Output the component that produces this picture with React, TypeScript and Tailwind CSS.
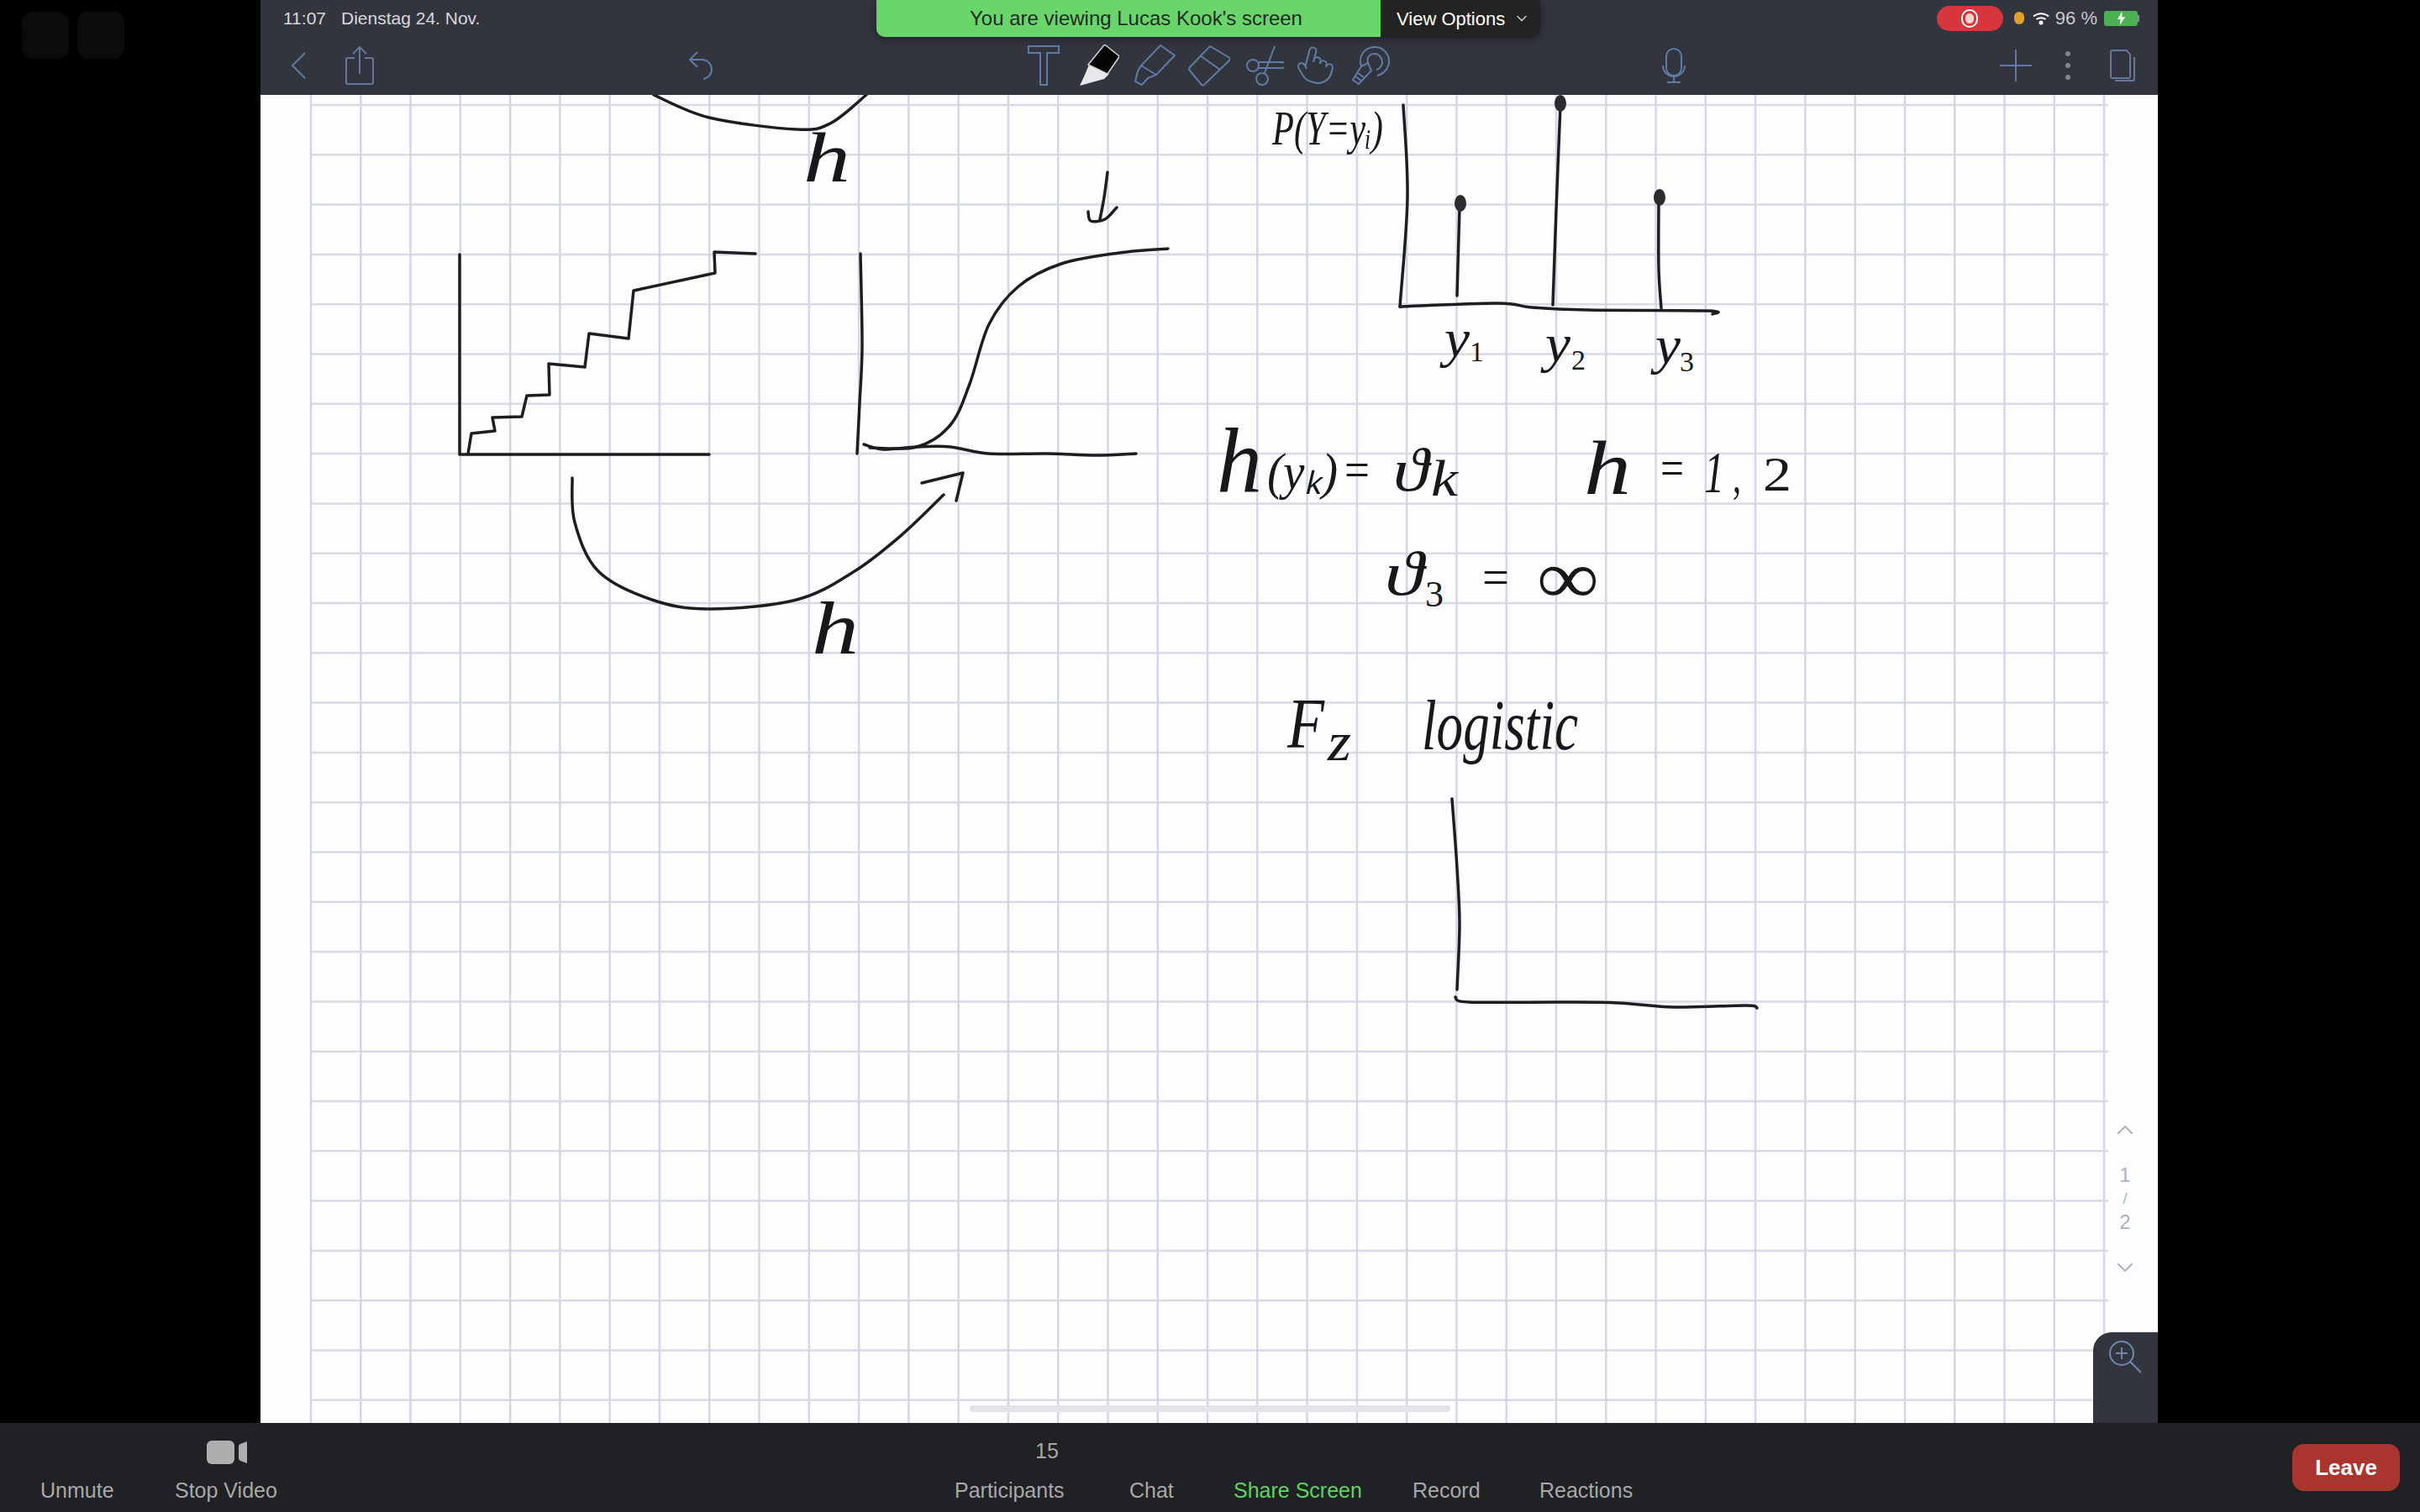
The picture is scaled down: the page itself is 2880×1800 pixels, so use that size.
import { ChevronDown, ChevronUp, Pointer } from "lucide-react";
import type { ReactNode } from "react";

type Pt = [number, number];

// Catmull-Rom through the points, good enough for pen strokes
function smooth(pts: Pt[]) {
  let d = `M${pts[0][0]} ${pts[0][1]}`;
  for (let i = 0; i < pts.length - 1; i++) {
    const p0 = pts[i - 1] ?? pts[i];
    const p1 = pts[i];
    const p2 = pts[i + 1];
    const p3 = pts[i + 2] ?? p2;
    const c1x = p1[0] + (p2[0] - p0[0]) / 6;
    const c1y = p1[1] + (p2[1] - p0[1]) / 6;
    const c2x = p2[0] - (p3[0] - p1[0]) / 6;
    const c2y = p2[1] - (p3[1] - p1[1]) / 6;
    d += ` C${c1x} ${c1y} ${c2x} ${c2y} ${p2[0]} ${p2[1]}`;
  }
  return d;
}

const poly = (pts: Pt[]) => "M" + pts.map((p) => p.join(" ")).join(" L");

const smoothStrokes: Pt[][] = [
  [[778, 113], [844, 140], [948, 154], [988, 147], [1031, 113]],
  [[1318, 205], [1314, 235], [1309, 261]],
  [[1329, 247], [1315, 261], [1298, 263], [1295, 252]],
  [[1024, 302], [1026, 412], [1023, 480], [1020, 540]],
  [[1028, 529], [1051, 535], [1091, 532], [1131, 532], [1177, 540], [1246, 540], [1304, 542], [1352, 540]],
  [[1035, 533], [1091, 532], [1131, 506], [1154, 457], [1177, 386], [1212, 341], [1263, 314], [1332, 301], [1390, 296]],
  [[681, 569], [684, 622], [712, 680], [776, 714], [844, 725], [948, 714], [1017, 680], [1074, 636], [1123, 589]],
  [[1670, 125], [1675, 235], [1666, 365]],
  [[1666, 365], [1783, 361], [1823, 366], [1890, 369], [2033, 370], [2038, 374]],
  [[1857, 125], [1852, 250], [1848, 363]],
  [[1974, 243], [1974, 320], [1977, 367]],
  [[1728, 951], [1734, 1033], [1737, 1100], [1734, 1178]],
  [[1732, 1187], [1748, 1193], [1859, 1193], [1926, 1194], [1993, 1199], [2078, 1197], [2091, 1200]],
];

const straightStrokes: Pt[][] = [
  [[547, 303], [547, 541], [844, 541]],
  [
    [557, 540], [561, 516], [589, 513], [586, 497], [621, 496], [627, 471], [654, 470], [653, 433],
    [696, 437], [701, 397], [748, 403], [754, 346], [851, 325], [850, 300], [899, 302],
  ],
  [[1097, 575], [1146, 563], [1138, 596]],
  [[1737, 247], [1734, 352]],
];

const dots: Pt[] = [[1738, 242], [1857, 123], [1975, 235]];

function Ink({ x, y, size, w, plain, children }: { x: number; y: number; size: number; w?: number; plain?: boolean; children: ReactNode }) {
  return (
    <text
      x={x}
      y={y}
      fontSize={size}
      textLength={w}
      lengthAdjust={w ? "spacingAndGlyphs" : undefined}
      fontStyle={plain ? "normal" : "italic"}
      fill="#17181a"
    >
      {children}
    </text>
  );
}

function Notebook() {
  const columns = Array.from({ length: 37 }, (_, i) => 370 + i * 59.28);
  const rows = Array.from({ length: 27 }, (_, i) => 125 + i * 59.3);
  return (
    <svg viewBox="310 113 2258 1581" className="block w-full h-full font-['Liberation_Serif',serif]">
      <rect x="310" y="113" width="2258" height="1581" fill="#fdfdfe" />
      {rows.map((y) => (
        <line key={y} x1="370" x2="2509" y1={y} y2={y} stroke="#d9dae3" strokeWidth="2.5" />
      ))}
      {columns.map((x) => (
        <line key={x} x1={x} x2={x} y1="113" y2="1694" stroke="#d3d6e6" strokeWidth="2.5" />
      ))}

      <g fill="none" stroke="#1d1e20" strokeWidth="3.5" strokeLinecap="round" strokeLinejoin="round">
        {smoothStrokes.map((pts, i) => (
          <path key={i} d={smooth(pts)} />
        ))}
        {straightStrokes.map((pts, i) => (
          <path key={i} d={poly(pts)} />
        ))}
      </g>
      {dots.map(([x, y]) => (
        <ellipse key={x} cx={x} cy={y} rx="7" ry="10" fill="#2b2c2e" />
      ))}

      <Ink x={956} y={216} size={84} w={56}>h</Ink>
      <Ink x={966} y={778} size={88} w={56}>h</Ink>

      <Ink x={1514} y={172} size={56} w={132}>P(Y=yᵢ)</Ink>
      <Ink x={1719} y={424} size={64} w={30}>y</Ink>
      <Ink x={1749} y={430} size={34} plain>1</Ink>
      <Ink x={1839} y={430} size={64} w={30}>y</Ink>
      <Ink x={1870} y={440} size={34} plain>2</Ink>
      <Ink x={1970} y={432} size={64} w={30}>y</Ink>
      <Ink x={1999} y={442} size={34} plain>3</Ink>

      <Ink x={1448} y={586} size={110} w={54}>h</Ink>
      <Ink x={1508} y={582} size={62} w={84}>(yₖ)</Ink>
      <Ink x={1600} y={580} size={62} plain w={30}>=</Ink>
      <Ink x={1658} y={584} size={72} w={42}>ϑ</Ink>
      <Ink x={1703} y={590} size={62} w={32}>k</Ink>
      <Ink x={1885} y={588} size={90} w={56}>h</Ink>
      <Ink x={1976} y={578} size={62} plain w={28}>=</Ink>
      <Ink x={2028} y={586} size={70} w={24}>1</Ink>
      <Ink x={2062} y={586} size={60} w={10} plain>,</Ink>
      <Ink x={2098} y={584} size={58} w={34} plain>2</Ink>

      <Ink x={1648} y={708} size={74} w={46}>ϑ</Ink>
      <Ink x={1696} y={722} size={44} plain>3</Ink>
      <Ink x={1764} y={708} size={62} plain w={32}>=</Ink>
      <Ink x={1830} y={718} size={90} w={72}>∞</Ink>

      <Ink x={1532} y={890} size={84} w={44}>F</Ink>
      <Ink x={1580} y={905} size={66} w={28}>z</Ink>
      <Ink x={1692} y={892} size={84} w={186}>logistic</Ink>
    </svg>
  );
}

const toolStroke = "fill-none stroke-[#5f7ba6] stroke-2";

function StatusBar() {
  return (
    <div className="flex items-center h-[43px] pl-[27px] pr-[22px] text-[21px] text-[#d8d8dc]">
      <span>11:07</span>
      <span className="ml-[18px]">Dienstag 24. Nov.</span>
      <div className="ml-auto flex items-center w-[79px] h-[30px] justify-center rounded-full bg-[#d6363c]">
        <div className="flex items-center justify-center w-[20px] h-[22px] rounded-full border-2 border-white">
          <div className="w-[10px] h-[12px] rounded-full bg-[#f5d5d0]" />
        </div>
      </div>
      <div className="ml-[13px] w-[12px] h-[15px] rounded-full bg-[#e3a02c]" />
      <svg viewBox="0 0 20 16" className="ml-[10px] w-[20px] h-[16px] fill-none stroke-white stroke-2">
        <path d="M1 5.5C6 1 14 1 19 5.5M4.5 9c3-2.5 8-2.5 11 0" />
        <circle cx="10" cy="13" r="2.5" className="fill-white stroke-none" />
      </svg>
      <span className="ml-[7px] text-[22px] text-[#c9c9cc]">96 %</span>
      <div className="ml-[8px] flex items-center">
        <div className="flex items-center justify-center w-[40px] h-[18px] rounded-[3px] bg-[#4bb153]">
          <svg viewBox="0 0 12 18" className="w-[11px] h-[18px] fill-white">
            <path d="M7 0 1 10h4l-1 8 7-11H7z" />
          </svg>
        </div>
        <div className="w-[2px] h-[8px] bg-[#8a8a92]" />
      </div>
    </div>
  );
}

function ToolBar() {
  return (
    <div className="flex items-center h-[70px] pb-[1px]">
      <svg viewBox="0 0 18 32" className={`ml-[36px] w-[18px] h-[32px] ${toolStroke} stroke-[#4f86c6]`}>
        <path d="M17 1 2 16l15 15" />
      </svg>
      <svg viewBox="0 0 34 46" className={`ml-[47px] w-[34px] h-[46px] ${toolStroke} stroke-[#66789a]`}>
        <path d="M11 14H3a2 2 0 0 0-2 2v27a2 2 0 0 0 2 2h28a2 2 0 0 0 2-2V16a2 2 0 0 0-2-2h-8" />
        <path d="M17 33V2M9 9l8-8 8 8" />
      </svg>
      <svg viewBox="0 0 30 34" className={`ml-[374px] w-[30px] h-[34px] ${toolStroke}`}>
        <path d="M11 1 2 10l9 9M2 10h14a12 12 0 0 1 12 12c0 5-4 10-10 11" />
      </svg>
      <svg viewBox="0 0 38 48" className={`ml-[374px] w-[38px] h-[48px] ${toolStroke}`}>
        <path d="M1 1h36v8H23v38h-8V9H1z" />
      </svg>
      <svg viewBox="0 0 48 50" className="ml-[23px] w-[48px] h-[50px]">
        <path d="M1 49 7 36 12 24 36 35 30 41z" fill="#e8e8ea" />
        <path d="M32 1 47 13a2 2 0 0 1 0 3L34 35 11 24 29 2a2 2 0 0 1 3-1z" fill="#050505" stroke="#d8d8dc" strokeWidth="1.5" />
      </svg>
      <svg viewBox="0 0 50 50" className={`ml-[17px] w-[50px] h-[50px] ${toolStroke}`}>
        <path d="M32 1 49 13 27 36 17 40 10 48 2 44 5 32 9 25z" />
        <path d="M9 25 27 36" />
      </svg>
      <svg viewBox="0 0 50 50" className={`ml-[15px] w-[50px] h-[50px] ${toolStroke}`}>
        <path d="M26 2 48 15a3 3 0 0 1 1 4L20 47a3 3 0 0 1-4 1L2 31a3 3 0 0 1 0-4z" />
        <path d="M14 13 38 30" />
      </svg>
      <svg viewBox="0 0 46 48" className={`ml-[18px] w-[46px] h-[48px] ${toolStroke}`}>
        <circle cx="9" cy="24" r="7" />
        <circle cx="20" cy="40" r="7" />
        <path d="M35 1 23 33M16 20h28a3 3 0 0 1 0 7H15" />
      </svg>
      <Pointer className="ml-[14px] w-[48px] h-[50px] text-[#5f7ba6] rotate-[15deg]" strokeWidth={1} />
      <svg viewBox="0 0 46 48" className={`ml-[18px] w-[46px] h-[48px] ${toolStroke}`}>
        <path d="M12 25C8 13 16 2 28 2c10 0 17 8 17 17 0 8-6 15-14 17" />
        <path d="M20 21c-2-7 2-11 8-11 5 0 9 5 9 10 0 4-3 8-7 9" />
        <path d="M12 25 20 21 24 30 9 46 2 41z" />
        <path d="M8 33 15 38M5 37 12 42" />
      </svg>
      <svg viewBox="0 0 28 42" className={`ml-[324px] w-[28px] h-[42px] ${toolStroke}`}>
        <rect x="5" y="1" width="18" height="32" rx="9" />
        <path d="M1 21a13 13 0 0 0 26 0M14 34v6M6 41h16" />
      </svg>
      <svg viewBox="0 0 38 38" className={`ml-[374px] w-[38px] h-[38px] ${toolStroke}`}>
        <path d="M19 0v38M0 19h38" />
      </svg>
      <div className="ml-[40px] flex flex-col gap-[8px]">
        <div className="w-[6px] h-[6px] rounded-full bg-[#7f8694]" />
        <div className="w-[6px] h-[6px] rounded-full bg-[#7f8694]" />
        <div className="w-[6px] h-[6px] rounded-full bg-[#7f8694]" />
      </div>
      <svg viewBox="0 0 30 38" className={`ml-[47px] w-[30px] h-[38px] ${toolStroke} stroke-[#66789a]`}>
        <path d="M1 3a2 2 0 0 1 2-2h17l4 5v26a2 2 0 0 1-2 2H3a2 2 0 0 1-2-2zM6 37h21a2 2 0 0 0 2-2V9" />
      </svg>
    </div>
  );
}

function BottomLabel({ className, children }: { className: string; children: ReactNode }) {
  return <span className={`absolute bottom-[11px] leading-[30px] ${className}`}>{children}</span>;
}

export default function App() {
  return (
    <div className="relative w-[2880px] h-[1800px] overflow-hidden bg-black font-['Liberation_Sans',Arial,sans-serif]">
      <div className="flex h-[1694px]">
        {/* faint dock tiles on the black margin */}
        <div className="flex w-[310px] gap-[10px] pl-[26px] pt-[14px]">
          <div className="w-[56px] h-[56px] rounded-[13px] bg-[#0a0c0b]" />
          <div className="w-[56px] h-[56px] rounded-[13px] bg-[#0a0c0b]" />
        </div>

        <div className="relative flex flex-col w-[2258px]">
          <div className="bg-[#32343e]">
            <StatusBar />
            <ToolBar />
          </div>
          <div className="relative flex-1 min-h-0">
            <Notebook />

            <div className="absolute left-[2198px] top-[1216px] flex flex-col items-center w-[42px] text-[#a9b2c2] text-[24px] leading-[28px]">
              <ChevronUp className="w-[32px] h-[32px] mb-[24px]" strokeWidth={1.5} />
              <span>1</span>
              <span className="text-[18px]">/</span>
              <span>2</span>
              <ChevronDown className="w-[32px] h-[32px] mt-[24px]" strokeWidth={1.5} />
            </div>

            <div className="absolute left-[844px] bottom-[13px] w-[572px] h-[8px] rounded-full bg-[#e3e4e9]" />

            <div className="absolute right-0 bottom-0 w-[77px] h-[108px] rounded-tl-[22px] bg-[#32343e] pl-[19px] pt-[10px]">
              <svg viewBox="0 0 40 40" className="w-[40px] h-[40px] fill-none stroke-[#7088b0] stroke-2">
                <circle cx="15" cy="15" r="14" />
                <path d="M15 8v14M8 15h14M25 25l13 13" />
              </svg>
            </div>
          </div>

          {/* "you are viewing" banner sits over the shared screen */}
          <div className="absolute left-[733px] top-0 flex h-[44px] w-[790px] text-[24px] shadow-[0_2px_8px_rgba(0,0,0,0.4)] rounded-b-[10px]">
            <div className="flex items-center justify-center w-[600px] pl-[18px] rounded-bl-[10px] bg-[#69d66b] text-[#1f2b24]">
              You are viewing Lucas Kook's screen
            </div>
            <div className="flex items-center flex-1 rounded-br-[10px] bg-[#232323] pl-[19px] text-[22px] text-white">
              View Options
              <ChevronDown className="ml-[10px] w-[20px] h-[20px] text-[#c8c8c8]" strokeWidth={2} />
            </div>
          </div>
        </div>
      </div>

      <div className="relative h-[106px] bg-[#202124] text-[25px] text-[#a8a8a8]">
        <BottomLabel className="left-[48px]">Unmute</BottomLabel>
        <svg viewBox="0 0 48 28" className="absolute left-[246px] top-[21px] w-[48px] h-[28px] fill-[#aeaeae]">
          <rect x="0" y="0" width="33" height="28" rx="6" />
          <path d="M48 1v26l-8-3a3 3 0 0 1-2-3V7a3 3 0 0 1 2-3z" />
        </svg>
        <BottomLabel className="left-[208px]">Stop Video</BottomLabel>

        <span className="absolute left-[1232px] top-[18px] leading-[30px]">15</span>
        <BottomLabel className="left-[1136px]">Participants</BottomLabel>
        <BottomLabel className="left-[1344px]">Chat</BottomLabel>
        <BottomLabel className="left-[1468px] text-[#5fd35f]">Share Screen</BottomLabel>
        <BottomLabel className="left-[1681px]">Record</BottomLabel>
        <BottomLabel className="left-[1832px]">Reactions</BottomLabel>

        <div className="absolute right-[24px] top-[25px] flex items-center justify-center w-[128px] h-[56px] rounded-[14px] bg-[#aa352f] text-[26px] font-bold text-white">
          Leave
        </div>
      </div>
    </div>
  );
}
